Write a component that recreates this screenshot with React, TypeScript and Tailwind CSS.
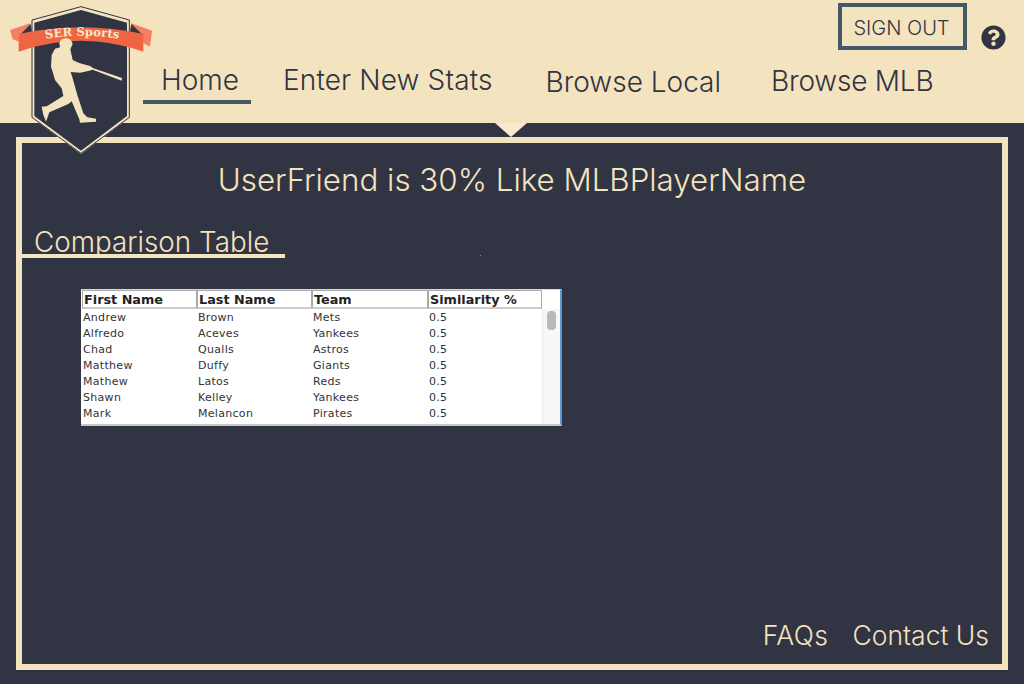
import { FaQuestionCircle } from "react-icons/fa";

const rows = [
  ["Andrew", "Brown", "Mets", "0.5"],
  ["Alfredo", "Aceves", "Yankees", "0.5"],
  ["Chad", "Qualls", "Astros", "0.5"],
  ["Matthew", "Duffy", "Giants", "0.5"],
  ["Mathew", "Latos", "Reds", "0.5"],
  ["Shawn", "Kelley", "Yankees", "0.5"],
  ["Mark", "Melancon", "Pirates", "0.5"],
];

const headers = [
  { label: "First Name", w: "w-[115px]" },
  { label: "Last Name", w: "w-[115px]" },
  { label: "Team", w: "w-[116px]" },
  { label: "Similarity %", w: "w-[114px]" },
];

function Logo() {
  return (
    <svg viewBox="0 0 510 480" width="170" height="160" className="absolute left-0 top-0 z-20">
      {/* shield */}
      <path d="M243 18 L390 60 L390 352 L243 462 L94 352 L94 60 Z" fill="#f4e3bf" />
      <path d="M243 20 L388 60 L388 352 L243 460 L96 352 L96 60 Z" fill="none" stroke="#313443" strokeWidth="3" />
      <path d="M243 30 L381 68 L381 348 L243 452 L103 348 L103 68 Z" fill="#313443" />
      {/* ribbon ends */}
      <path d="M30 90 L90 70 L96 100 L58 125 L38 118 Z" fill="#f57f64" />
      <path d="M456 92 L394 70 L388 100 L428 128 L450 140 Z" fill="#f57f64" />
      <path d="M62 103 L92 72 L96 96 Z" fill="#313443" />
      <path d="M426 103 L394 72 L390 96 Z" fill="#313443" />
      {/* ribbon */}
      <path d="M56 102 Q243 62 430 102 L430 155 Q243 90 56 155 Z" fill="#ef6544" />
      <path id="ribbon-line" d="M128 118 Q243 96 365 118" fill="none" />
      <text fontFamily="'DejaVu Serif', serif" fontWeight="700" fontSize="35" fill="#f8e7c8">
        <textPath href="#ribbon-line" startOffset="50%" textAnchor="middle">SER Sports</textPath>
      </text>
      {/* batter */}
      <path
        fill="#f4e3bf"
        d="M178 128 C182 114 204 110 214 122 L218 132 L211 148 L218 180 L232 187 L240 190 L270 198 L280 205 L366 234 L365 242 L278 209 L265 213 L240 218 L212 216 L218 235 L232 285 L250 340 L262 352 L288 356 L288 365 L240 368 L238 358 L215 304 L205 312 L148 337 L138 365 L130 345 L125 320 L140 319 L150 313 L190 288 L185 265 L165 240 L160 222 L153 200 L155 165 L165 146 L180 142 Z"
      />
    </svg>
  );
}

function ComparisonTable() {
  return (
    <div className="ml-[59px] mt-[31px] w-[481px] h-[137px] bg-white border-t border-t-[#d8d8d8] border-r-2 border-r-[#5b9bd5] border-b-2 border-b-[#c8c8c8] font-['DejaVu_Sans',sans-serif] font-normal relative">
      <div className="flex pl-px">
        {headers.map((h) => (
          <div
            key={h.label}
            className={`${h.w} h-[19px] border border-[#aaaaaa] border-b-2 border-b-[#cccccc] pl-px text-[12.8px] leading-[17px] font-bold text-[#222]`}
          >
            {h.label}
          </div>
        ))}
      </div>
      <div className="flex">
        <div className="w-[461px] pt-[1px]">
          {rows.map((r) => (
            <div key={r[0]} className="flex h-4 text-[11px] leading-4 text-[#333] tracking-[0.3px]">
              <div className="w-[115px] pl-[2px]">{r[0]}</div>
              <div className="w-[115px] pl-[2px]">{r[1]}</div>
              <div className="w-[116px] pl-[2px]">{r[2]}</div>
              <div className="w-[115px] pl-[2px]">{r[3]}</div>
            </div>
          ))}
        </div>
        <div className="w-[18px] h-[115px] bg-[#f7f7f7] border-l border-[#eeeeee] pt-[2px] pl-[4px]">
          <div className="w-[9px] h-[19px] rounded-[4px] bg-[#b9b9b9]" />
        </div>
      </div>
    </div>
  );
}

export default function App() {
  return (
    <div className="relative w-[1024px] h-[684px] overflow-hidden bg-[#313443] font-['Inter',sans-serif] font-light">
      <Logo />
      <header className="relative h-[123px] bg-[#f4e3bf] text-[#313443]">
        <div className="flex justify-end items-start pt-[3px] pr-[18px] h-[57px]">
          <button className="w-[129px] h-[47px] border-4 border-[#45596b] pt-[2px] pr-[2px] text-[20px] leading-none text-[#313443]">
            SIGN OUT
          </button>
          <FaQuestionCircle className="ml-[14px] mt-[22px] text-[25px] text-[#313443]" />
        </div>
        <nav className="flex items-start pl-[143px] text-[28px] leading-[40px]">
          <a className="w-[108px] h-[47px] pl-[6px] text-center border-b-4 border-[#45596b] pt-[3px]">Home</a>
          <a className="ml-[32px] pt-[3px] tracking-[0.15px]">Enter New Stats</a>
          <a className="ml-[53px] pt-[5px]">Browse Local</a>
          <a className="ml-[50px] pt-[4px] tracking-[-0.2px]">Browse MLB</a>
        </nav>
        <div className="absolute left-[495px] top-[123px] w-0 h-0 border-l-[16px] border-r-[16px] border-t-[14px] border-l-transparent border-r-transparent border-t-[#f8e9cd]" />
      </header>
      <main className="relative mx-4 mt-[14px] h-[533px] border-[6px] border-[#f4e3bf] flex flex-col text-[#f4e3bf]">
        <h1 className="text-center text-[31.3px] leading-[40px] mt-[17px]">
          UserFriend is 30% Like MLBPlayerName
        </h1>
        <div className="mt-[19px] w-[263px] h-[39px] border-b-4 border-[#f4e3bf] pl-3 pt-[5px] text-[27.8px] leading-[36px]">
          Comparison Table
        </div>
        <ComparisonTable />
        <div className="mt-auto mb-[11px] flex justify-end gap-[24px] pr-[13px] text-[26.5px] leading-[36px]">
          <a className="tracking-[0.4px]">FAQs</a>
          <a>Contact Us</a>
        </div>
        <div className="absolute left-[458px] top-[112px] w-px h-px bg-[#8d8c80]" />
      </main>
    </div>
  );
}
